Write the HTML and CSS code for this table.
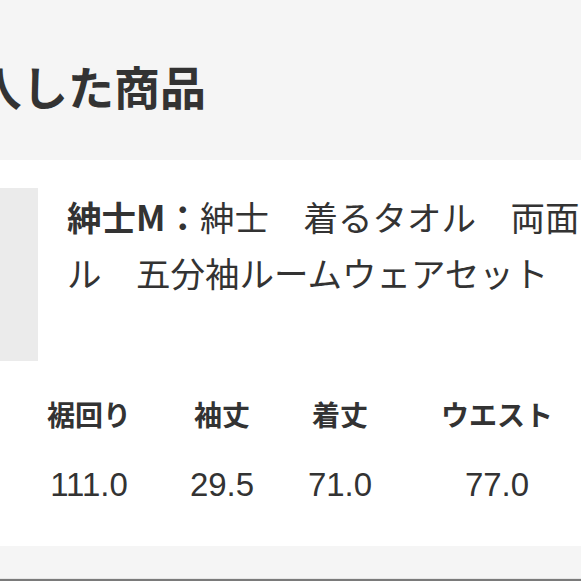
FILE: index.html
```html
<!DOCTYPE html>
<html lang="ja">
<head>
<meta charset="utf-8">
<link rel="stylesheet" href="styles.css">
</head>
<body>
<div class="page">
  <h1 class="heading">購入した商品</h1>
  <section class="card">
    <div class="product">
      <div class="thumb"></div>
      <p class="title"><b>紳士M：</b>紳士　着るタオル　両面パイル　五分袖ルームウェアセット</p>
    </div>
    <div class="sizes">
      <div class="th">裾回り</div>
      <div class="th">袖丈</div>
      <div class="th">着丈</div>
      <div class="th">ウエスト</div>
      <div class="td">111.0</div>
      <div class="td">29.5</div>
      <div class="td">71.0</div>
      <div class="td">77.0</div>
    </div>
  </section>
  <div class="bottom"></div>
</div>
</body>
</html>
```

FILE: styles.css
```css
html, body {
  margin: 0;
  padding: 0;
}
body {
  background: #f5f5f5;
  width: 581px;
  height: 581px;
  overflow: hidden;
  font-family: "Noto Sans CJK JP", sans-serif;
  color: #333;
}
.page {
  display: flex;
  flex-direction: column;
  height: 581px;
}
.heading {
  margin: 0 0 0 -70px;
  padding-top: 62px;
  height: 98px;
  font-size: 46px;
  line-height: 46px;
  font-weight: 700;
  color: #333;
  white-space: nowrap;
}
.card {
  background: #fff;
  height: 386px;
  box-sizing: border-box;
  padding-top: 28px;
}
.product {
  display: flex;
  gap: 29px;
  margin-left: -135px;
}
.thumb {
  flex: 0 0 173px;
  height: 173px;
  background: #ebebeb;
}
.title {
  margin: 0;
  flex: 0 0 604px;
  width: 604px;
  font-size: 34.5px;
  line-height: 56px;
  color: #333;
}
.title b {
  font-weight: 700;
}
.sizes {
  display: grid;
  grid-template-columns: 122px 144px 92px 222px;
  grid-template-rows: 40px 40px;
  row-gap: 31px;
  margin: 33px 0 0 28px;
  text-align: center;
  white-space: nowrap;
}
.th {
  font-size: 28px;
  line-height: 40px;
  font-weight: 700;
}
.td {
  font-family: "Liberation Sans", "Noto Sans CJK JP", sans-serif;
  font-size: 33px;
  line-height: 40px;
}
.bottom {
  margin-top: auto;
  height: 2px;
  background: #7a7a7a;
  border-top: 1px solid #e6e6e6;
}
```
